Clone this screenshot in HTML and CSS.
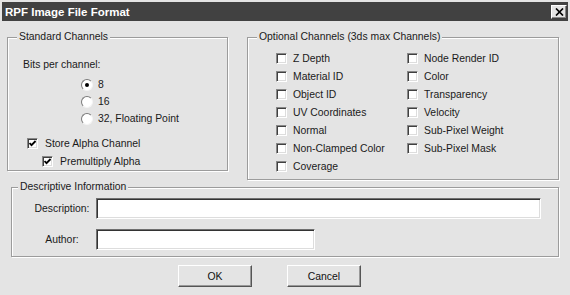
FILE: index.html
```html
<!DOCTYPE html>
<html lang="en">

<head>
    <meta charset="UTF-8">
    <meta name="viewport" content="width=device-width, initial-scale=1.0">
    <title>RPF Image File Format</title>
    <link rel="stylesheet" href="styles.css">
</head>

<body>
    <div class="window">
        <div class="titlebar">
            <span class="title">RPF Image File Format</span>
            <button class="close">
                <svg width="9" height="8" viewBox="0 0 9 8"><path d="M1 0.5 L8 7.5 M8 0.5 L1 7.5" stroke="#000" stroke-width="1.7" fill="none"/></svg>
            </button>
        </div>
        <div class="content">
            <div class="groups">
                <fieldset class="group standard">
                    <legend>Standard Channels</legend>
                    <div class="bits-label">Bits per channel:</div>
                    <div class="radios">
                        <div class="radio-row"><span class="radio checked"></span>8</div>
                        <div class="radio-row"><span class="radio"></span>16</div>
                        <div class="radio-row"><span class="radio"></span>32, Floating Point</div>
                    </div>
                    <div class="check-row alpha">
                        <span class="check"><svg width="7" height="7" viewBox="0 0 7 7"><path d="M0.5 3 L2.5 5.2 L6.6 1" stroke="#000" stroke-width="1.8" fill="none"/></svg></span>Store Alpha Channel
                    </div>
                    <div class="check-row premult">
                        <span class="check"><svg width="7" height="7" viewBox="0 0 7 7"><path d="M0.5 3 L2.5 5.2 L6.6 1" stroke="#000" stroke-width="1.8" fill="none"/></svg></span>Premultiply Alpha
                    </div>
                </fieldset>
                <fieldset class="group optional">
                    <legend>Optional Channels (3ds max Channels)</legend>
                    <div class="channel-grid">
                        <div class="check-row"><span class="check"></span>Z Depth</div>
                        <div class="check-row"><span class="check"></span>Material ID</div>
                        <div class="check-row"><span class="check"></span>Object ID</div>
                        <div class="check-row"><span class="check"></span>UV Coordinates</div>
                        <div class="check-row"><span class="check"></span>Normal</div>
                        <div class="check-row"><span class="check"></span>Non-Clamped Color</div>
                        <div class="check-row"><span class="check"></span>Coverage</div>
                        <div class="check-row"><span class="check"></span>Node Render ID</div>
                        <div class="check-row"><span class="check"></span>Color</div>
                        <div class="check-row"><span class="check"></span>Transparency</div>
                        <div class="check-row"><span class="check"></span>Velocity</div>
                        <div class="check-row"><span class="check"></span>Sub-Pixel Weight</div>
                        <div class="check-row"><span class="check"></span>Sub-Pixel Mask</div>
                    </div>
                </fieldset>
            </div>
            <fieldset class="group descriptive">
                <legend>Descriptive Information</legend>
                <div class="field-row">
                    <span class="field-label">Description:</span>
                    <input class="field wide" type="text">
                </div>
                <div class="field-row author">
                    <span class="field-label">Author:</span>
                    <input class="field short" type="text">
                </div>
            </fieldset>
            <div class="buttons">
                <button class="btn">OK</button>
                <button class="btn">Cancel</button>
            </div>
        </div>
    </div>
</body>

</html>
```
FILE: styles.css
```css
body {
    margin: 0;
    background-color: #e4e4e4;
    font-family: "Liberation Sans", Arial, sans-serif;
    font-size: 10.4px;
    color: #1a1a1a;
}

.window {
    width: 570px;
    height: 295px;
    box-sizing: border-box;
    padding: 2px;
    background-color: #e4e4e4;
}

.titlebar {
    height: 19px;
    background-color: #414141;
    display: flex;
    align-items: center;
    justify-content: space-between;
    padding: 0 1px 0 3px;
}

.title {
    color: #fff;
    font-weight: bold;
    font-size: 11.5px;
}

.close {
    width: 16px;
    height: 14px;
    padding: 0;
    margin-top: 1px;
    display: flex;
    align-items: center;
    justify-content: center;
    background-color: #e4e4e4;
    border: 1px solid;
    border-color: #fff #404040 #404040 #fff;
    box-shadow: inset -1px -1px 0 #888;
}

.groups {
    display: flex;
    align-items: flex-start;
    gap: 19px;
    margin-top: 10px;
    padding-left: 5px;
}

.group {
    margin: 0;
    padding: 0;
    min-width: 0;
    box-sizing: border-box;
    border: 1px solid #9c9c9c;
    box-shadow: 1px 1px 0 #fff, inset 1px 1px 0 #fff;
}

.group legend {
    padding: 0 2px;
    margin-left: 9px;
    line-height: 12px;
    background-color: #e4e4e4;
}

.standard {
    width: 221px;
    height: 140px;
}

.optional {
    width: 312px;
    height: 149px;
}

.bits-label {
    margin-top: 15px;
    padding-left: 15px;
    line-height: 14px;
}

.radios {
    margin-top: 4px;
    padding-left: 73px;
}

.radio-row {
    height: 17px;
    display: flex;
    align-items: center;
    gap: 5px;
}

.radio {
    width: 12px;
    height: 12px;
    box-sizing: border-box;
    border-radius: 50%;
    border: 1px solid;
    border-color: #7a7a7a #f4f4f4 #f4f4f4 #7a7a7a;
    background-color: #fff;
    display: flex;
    align-items: center;
    justify-content: center;
}

.radio.checked::after {
    content: "";
    width: 4px;
    height: 4px;
    border-radius: 50%;
    background-color: #000;
}

.check-row {
    height: 18px;
    display: flex;
    align-items: center;
    gap: 7px;
}

.check {
    width: 11px;
    height: 11px;
    box-sizing: border-box;
    border: 1px solid;
    border-color: #888 #fff #fff #888;
    box-shadow: inset 1px 1px 0 #404040, inset -1px -1px 0 #ddd;
    background-color: #fff;
    display: flex;
    align-items: center;
    justify-content: center;
    flex: none;
}

.alpha {
    margin-top: 7px;
    padding-left: 19px;
}

.premult {
    padding-left: 34px;
}

.channel-grid {
    display: grid;
    grid-template-columns: 131px auto;
    grid-template-rows: repeat(7, 18px);
    grid-auto-flow: column;
    margin-top: 6px;
    padding-left: 28px;
}

.channel-grid .check-row {
    gap: 6px;
}

.descriptive {
    width: 548px;
    height: 76px;
    margin-top: 1px;
    margin-left: 9px;
}

.descriptive legend {
    margin-left: 6px;
}

.field-row {
    display: flex;
    align-items: center;
    gap: 5px;
    margin-top: 5px;
    padding-left: 21px;
}

.field-row.author {
    margin-top: 10px;
}

.field-label {
    width: 58px;
    text-align: center;
}

.field {
    height: 21px;
    box-sizing: border-box;
    margin: 0;
    border: 1px solid;
    border-color: #707070 #fff #fff #707070;
    box-shadow: inset 1px 1px 0 #333, inset -1px -1px 0 #ddd;
    background-color: #fff;
    outline: none;
}

.wide {
    width: 445px;
}

.short {
    width: 219px;
}

.buttons {
    display: flex;
    gap: 35px;
    margin-top: 8px;
    padding-left: 176px;
}

.btn {
    width: 74px;
    height: 22px;
    padding: 0;
    font-family: "Liberation Sans", Arial, sans-serif;
    font-size: 10.4px;
    color: #111;
    background-color: #e4e4e4;
    border: 1px solid;
    border-color: #fff #555 #555 #fff;
    box-shadow: inset -1px -1px 0 #999;
}
```
